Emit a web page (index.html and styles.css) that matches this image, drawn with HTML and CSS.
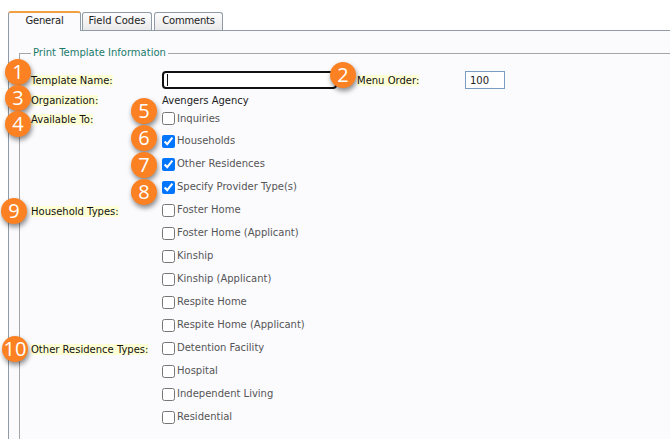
FILE: index.html
```html
<!DOCTYPE html>
<html lang="en">
<head>
    <meta charset="UTF-8">
    <title>Print Template</title>
    <link rel="stylesheet" href="styles.css">
</head>
<body>
    <div class="tabs">
        <div class="tab active">General</div>
        <div class="tab codes">Field Codes</div>
        <div class="tab comments">Comments</div>
    </div>

    <div class="panel">
        <fieldset class="group">
            <legend>Print Template Information</legend>

            <div class="row name-row">
                <div class="label"><span>Template Name:</span></div>
                <input type="text" class="name-input">
                <div class="label order-label"><span>Menu Order:</span></div>
                <input type="text" class="order-input" value="100">
            </div>

            <div class="row org-row">
                <div class="label"><span>Organization:</span></div>
                <div class="value">Avengers Agency</div>
            </div>

            <div class="row check-row first-check">
                <div class="label"><span>Available To:</span></div>
                <label class="check"><input type="checkbox">Inquiries</label>
            </div>
            <div class="row check-row">
                <div class="label"></div>
                <label class="check"><input type="checkbox" checked>Households</label>
            </div>
            <div class="row check-row">
                <div class="label"></div>
                <label class="check"><input type="checkbox" checked>Other Residences</label>
            </div>
            <div class="row check-row">
                <div class="label"></div>
                <label class="check"><input type="checkbox" checked>Specify Provider Type(s)</label>
            </div>

            <div class="row check-row">
                <div class="label"><span>Household Types:</span></div>
                <label class="check"><input type="checkbox">Foster Home</label>
            </div>
            <div class="row check-row">
                <div class="label"></div>
                <label class="check"><input type="checkbox">Foster Home (Applicant)</label>
            </div>
            <div class="row check-row">
                <div class="label"></div>
                <label class="check"><input type="checkbox">Kinship</label>
            </div>
            <div class="row check-row">
                <div class="label"></div>
                <label class="check"><input type="checkbox">Kinship (Applicant)</label>
            </div>
            <div class="row check-row">
                <div class="label"></div>
                <label class="check"><input type="checkbox">Respite Home</label>
            </div>
            <div class="row check-row">
                <div class="label"></div>
                <label class="check"><input type="checkbox">Respite Home (Applicant)</label>
            </div>

            <div class="row check-row">
                <div class="label"><span>Other Residence Types:</span></div>
                <label class="check"><input type="checkbox">Detention Facility</label>
            </div>
            <div class="row check-row">
                <div class="label"></div>
                <label class="check"><input type="checkbox">Hospital</label>
            </div>
            <div class="row check-row">
                <div class="label"></div>
                <label class="check"><input type="checkbox">Independent Living</label>
            </div>
            <div class="row check-row">
                <div class="label"></div>
                <label class="check"><input type="checkbox">Residential</label>
            </div>
        </fieldset>
    </div>

    <!-- numbered callouts on top of the screenshot -->
    <div class="badge b1">1</div>
    <div class="badge b2">2</div>
    <div class="badge b3">3</div>
    <div class="badge b4">4</div>
    <div class="badge b5">5</div>
    <div class="badge b6">6</div>
    <div class="badge b7">7</div>
    <div class="badge b8">8</div>
    <div class="badge b9">9</div>
    <div class="badge b10">10</div>
</body>
</html>
```

FILE: styles.css
```css
html, body {
    height: 439px;
    overflow: hidden;
}

body {
    margin: 0;
    background-color: #fff;
    color: #222;
    font-family: "DejaVu Sans", Verdana, sans-serif;
    font-size: 10px;
    position: relative;
}

/* --- Tabs --- */
.tabs {
    display: flex;
    gap: 1px;
    padding: 11px 0 0 8px;
    height: 30px;
    box-sizing: border-box;
    position: relative;
    z-index: 1;
}

.tab {
    height: 18px;
    box-sizing: border-box;
    margin-top: 1px;
    padding-top: 1px;
    font-size: 10px;
    line-height: 14px;
    text-align: center;
    color: #222;
    background: linear-gradient(#fdfdfd, #e9e9e9);
    border: 1px solid #8f9ba6;
    border-bottom: 0;
    border-radius: 3px 3px 0 0;
}

.tab.active {
    width: 73px;
    height: 20px;
    margin-top: 0;
    padding-top: 1px;
    letter-spacing: -0.2px;
    background: #fbfbfe;
    border-top: 2px solid #f0a040;
}

.tab.codes {
    width: 70px;
}

.tab.comments {
    width: 69px;
    margin-left: 1px;
    letter-spacing: -0.2px;
}

/* --- Panel --- */
.panel {
    height: 409px;
    margin-left: 8px;
    box-sizing: border-box;
    background-color: #fbfbfe;
    border-top: 1px solid #8f9ba6;
    border-left: 1px solid #8f9ba6;
    padding: 16px 0 0 10px;
}

.group {
    margin: 0;
    padding: 11px 0 0 11px;
    border: 0;
    border-top: 1px solid #a5a5a5;
    border-left: 1px solid #a5a5a5;
    min-width: 0;
    height: 392px;
    box-sizing: border-box;
}

.group legend {
    margin-left: 0;
    padding: 0 2px;
    color: #1a7a6a;
    font-size: 10px;
    line-height: 12px;
}

/* --- Rows --- */
.row {
    display: flex;
    align-items: center;
}

.label {
    width: 131px;
    flex-shrink: 0;
    color: #111;
}

.label span {
    background-color: #ffffd5;
}

.name-row {
    height: 20px;
}

.name-input {
    width: 175px;
    height: 18px;
    box-sizing: border-box;
    margin: 0;
    border: 2px solid #111;
    border-radius: 4px;
    background: linear-gradient(#111, #111) no-repeat 3px 1px / 1px 12px #fff;
}

.order-label {
    width: 108px;
    margin-left: 20px;
}

.order-input {
    width: 40px;
    height: 18px;
    box-sizing: border-box;
    margin: 0;
    padding: 0 4px;
    border: 1px solid #7a9cc0;
    background-color: #fff;
    font-family: inherit;
    font-size: 10px;
    color: #222;
}

.org-row {
    height: 20px;
}

.value {
    color: #222;
}

.check-row {
    height: 23px;
}

.check-row .label {
    margin-top: 3px;
}

.first-check {
    height: 16px;
    margin-bottom: 3px;
}

.check {
    display: flex;
    align-items: center;
    color: #555;
}

.check input {
    width: 13px;
    height: 13px;
    margin: 1px 2px 0 0;
    accent-color: #0075ff;
}

/* --- Callouts --- */
.badge {
    position: absolute;
    width: 26px;
    height: 26px;
    border-radius: 50%;
    background-color: #fb8122;
    color: #fff;
    font-family: "Open Sans", sans-serif;
    font-size: 20px;
    line-height: 25px;
    text-align: center;
    box-shadow: 1px 3px 5px rgba(0, 0, 0, 0.45);
}

.b1 { left: 5px; top: 59px; }
.b2 { left: 330px; top: 62px; }
.b3 { left: 5px; top: 85px; }
.b4 { left: 5px; top: 111px; }
.b5 { left: 131px; top: 98px; }
.b6 { left: 131px; top: 125px; }
.b7 { left: 131px; top: 152px; }
.b8 { left: 131px; top: 179px; }
.b9 { left: 1px; top: 198px; }
.b10 { left: 2px; top: 336px; }
```
